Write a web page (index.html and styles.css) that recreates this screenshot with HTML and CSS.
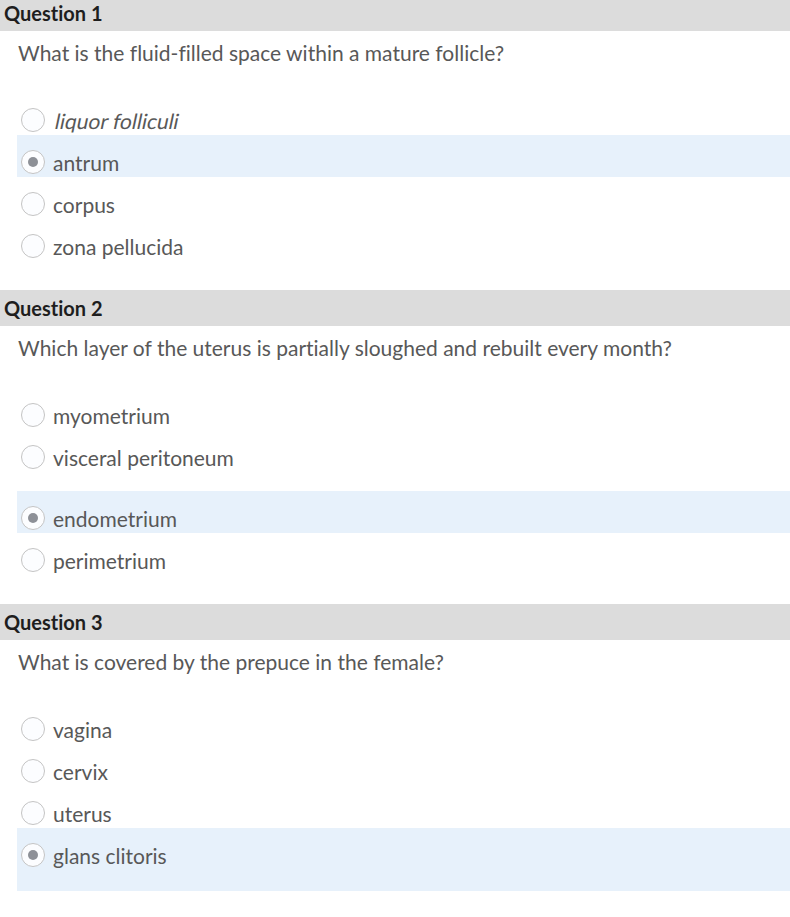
FILE: index.html
```html
<!DOCTYPE html>
<html lang="en">
<head>
<meta charset="utf-8">
<title>Quiz</title>
<link rel="stylesheet" href="styles.css">
</head>
<body>
<div class="quiz">
  <section class="question">
    <div class="q-header">Question 1</div>
    <div class="q-body">
      <p class="q-text">What is the fluid-filled space within a mature follicle?</p>
      <div class="options">
        <div class="option"><span class="radio"></span><span class="label"><em>liquor folliculi</em></span></div>
        <div class="option selected"><span class="radio"></span><span class="label">antrum</span></div>
        <div class="option"><span class="radio"></span><span class="label">corpus</span></div>
        <div class="option"><span class="radio"></span><span class="label">zona pellucida</span></div>
      </div>
    </div>
  </section>
  <section class="question">
    <div class="q-header">Question 2</div>
    <div class="q-body">
      <p class="q-text">Which layer of the uterus is partially sloughed and rebuilt every month?</p>
      <div class="options">
        <div class="option"><span class="radio"></span><span class="label">myometrium</span></div>
        <div class="option spaced"><span class="radio"></span><span class="label">visceral peritoneum</span></div>
        <div class="option selected"><span class="radio"></span><span class="label">endometrium</span></div>
        <div class="option"><span class="radio"></span><span class="label">perimetrium</span></div>
      </div>
    </div>
  </section>
  <section class="question">
    <div class="q-header">Question 3</div>
    <div class="q-body">
      <p class="q-text">What is covered by the prepuce in the female?</p>
      <div class="options">
        <div class="option"><span class="radio"></span><span class="label">vagina</span></div>
        <div class="option"><span class="radio"></span><span class="label">cervix</span></div>
        <div class="option"><span class="radio"></span><span class="label">uterus</span></div>
        <div class="option selected tall"><span class="radio"></span><span class="label">glans clitoris</span></div>
      </div>
    </div>
  </section>
</div>
</body>
</html>
```
FILE: styles.css
```css
html, body {
  margin: 0;
  padding: 0;
  background: #ffffff;
}
body {
  font-family: Lato, "Open Sans", "Liberation Sans", sans-serif;
  color: #555555;
  font-variant-ligatures: none;
}
.quiz {
  margin-top: -5px;
}
.question {
  margin-bottom: 23px;
}
.q-header {
  height: 36px;
  line-height: 36px;
  background: #dcdcdc;
  padding-left: 4px;
  font-size: 20px;
  font-weight: 700;
  color: #1e1e1e;
}
.q-body {
  padding-left: 17px;
}
.q-text {
  margin: 0 0 34px 0;
  padding: 10px 0 0 1px;
  font-size: 21px;
  line-height: 24px;
  color: #585858;
}
.options {
  display: flex;
  flex-direction: column;
}
.option {
  box-sizing: border-box;
  height: 42px;
  display: flex;
  align-items: center;
  padding-left: 4px;
  font-size: 21px;
  color: #585858;
}
.option.spaced {
  margin-bottom: 19px;
}
.option.selected {
  background: #e7f1fb;
  margin-top: -6px;
  margin-bottom: 6px;
  padding-top: 12px;
}
.option.selected.tall {
  height: 63px;
  padding-bottom: 21px;
  margin-bottom: 0;
}
.radio {
  box-sizing: border-box;
  width: 24px;
  height: 24px;
  border-radius: 50%;
  border: 1px solid #c4c4c4;
  background: #fcfdff;
  flex: none;
  display: flex;
  align-items: center;
  justify-content: center;
  margin-right: 8px;
}
.selected .radio::after {
  content: "";
  width: 10px;
  height: 10px;
  border-radius: 50%;
  background: #8d9097;
}
.label em {
  font-style: normal;
  display: inline-block;
  transform: skewX(-12deg);
  transform-origin: 0 100%;
}
```
